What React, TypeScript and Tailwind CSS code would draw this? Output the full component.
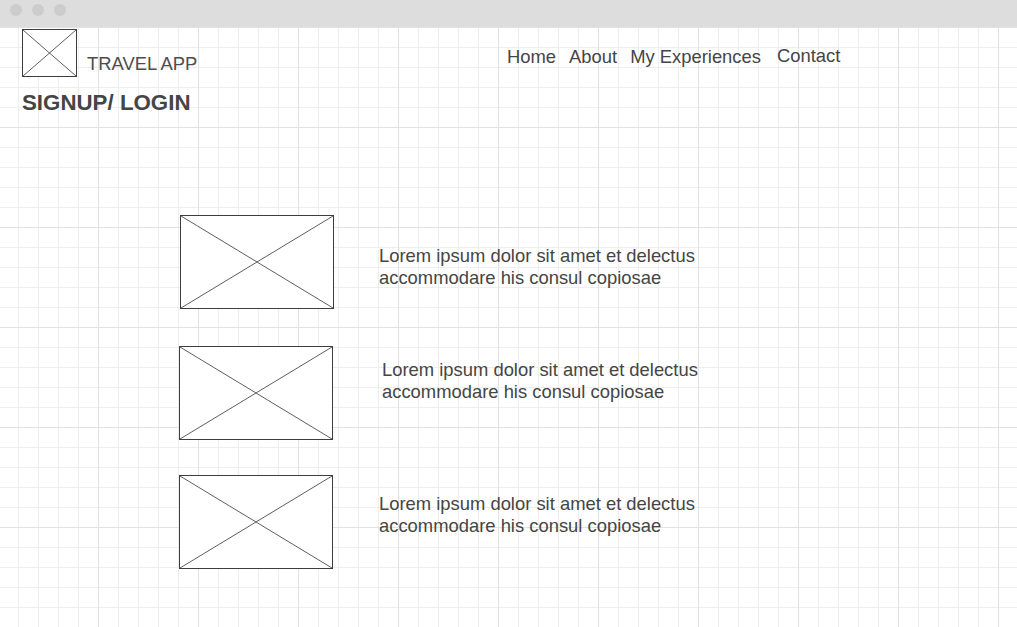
import React from "react";

function XBox({ w, h }: { w: number; h: number }) {
  return (
    <div
      className="shrink-0 border border-[#3d3d3d] bg-white"
      style={{ width: w, height: h }}
    >
      <svg width="100%" height="100%" viewBox="0 0 100 100" preserveAspectRatio="none" className="block">
        <line x1="0" y1="0" x2="100" y2="100" stroke="#5e5e5e" strokeWidth="1" vectorEffect="non-scaling-stroke" />
        <line x1="100" y1="0" x2="0" y2="100" stroke="#5e5e5e" strokeWidth="1" vectorEffect="non-scaling-stroke" />
      </svg>
    </div>
  );
}

export default function App() {
  return (
    <div className="w-[1017px] h-[627px] overflow-hidden bg-white font-['Liberation_Sans',Arial,sans-serif] text-[#454545]">
      <div className="h-[27px] bg-[#dddddd] flex items-start pt-[4px] pl-[10px] gap-[10px]">
        <div className="w-[12px] h-[12px] rounded-full bg-[#cccccc]" />
        <div className="w-[12px] h-[12px] rounded-full bg-[#cccccc]" />
        <div className="w-[12px] h-[12px] rounded-full bg-[#cccccc]" />
      </div>
      <div className="h-[600px] bg-white bg-[image:linear-gradient(to_right,#e2e2e2_1px,transparent_1px),linear-gradient(to_bottom,#e2e2e2_1px,transparent_1px),linear-gradient(to_right,#eeeeee_1px,transparent_1px),linear-gradient(to_bottom,#eeeeee_1px,transparent_1px)] bg-[size:100px_100px,100px_100px,20px_20px,20px_20px] bg-[position:-2px_0,-2px_0,-2px_0,-2px_0]">
        <div className="flex items-start pt-[2px] pl-[22px]">
          <div className="flex items-start w-[485px]">
            <XBox w={55} h={48} />
            <div className="ml-[10px] mt-[24px] text-[18.4px] leading-[21px] text-[#4d4d4d]">TRAVEL APP</div>
          </div>
          <nav className="flex items-start mt-[17px] text-[18.4px] leading-[21px]">
            <span>Home</span>
            <span className="ml-[13px]">About</span>
            <span className="ml-[13px]">My Experiences</span>
            <span className="ml-[16px] -mt-px">Contact</span>
          </nav>
        </div>
        <div className="pl-[22px] mt-[13px] text-[22.3px] leading-[25px] font-bold">SIGNUP/ LOGIN</div>

        <div className="flex flex-col">
          <div className="flex items-start ml-[180px] mt-[100px]">
            <XBox w={154} h={94} />
            <p className="ml-[45px] mt-[30px] text-[18.4px] leading-[22px]">
              Lorem ipsum dolor sit amet et delectus
              <br />
              accommodare his consul copiosae
            </p>
          </div>
          <div className="flex items-start ml-[179px] mt-[37px]">
            <XBox w={154} h={94} />
            <p className="ml-[49px] mt-[13px] text-[18.4px] leading-[22px]">
              Lorem ipsum dolor sit amet et delectus
              <br />
              accommodare his consul copiosae
            </p>
          </div>
          <div className="flex items-start ml-[179px] mt-[35px]">
            <XBox w={154} h={94} />
            <p className="ml-[46px] mt-[18px] text-[18.4px] leading-[22px]">
              Lorem ipsum dolor sit amet et delectus
              <br />
              accommodare his consul copiosae
            </p>
          </div>
        </div>
      </div>
    </div>
  );
}
